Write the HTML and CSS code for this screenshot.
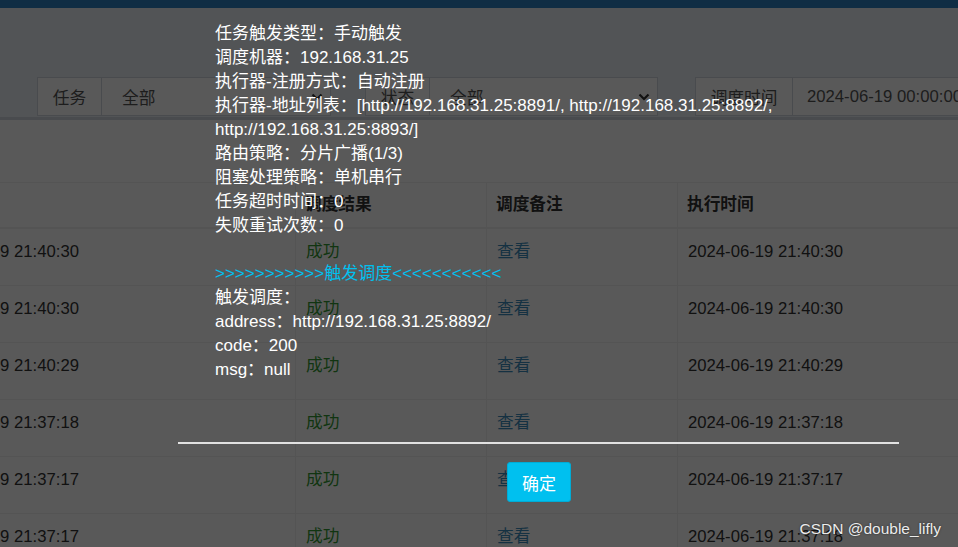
FILE: index.html
```html
<!DOCTYPE html>
<html lang="zh-CN">
<head>
<meta charset="utf-8">
<title>调度日志</title>
<link rel="stylesheet" href="styles.css">
</head>
<body>
<div class="page">
  <header class="topbar"></header>
  <section class="content">
    <div class="filters">
      <div class="igroup g1">
        <span class="addon">任务</span>
        <div class="select"><span>全部</span><svg class="chev" width="12" height="8" viewBox="0 0 12 8"><polyline points="1.5,1.5 6,6 10.5,1.5" fill="none" stroke="#333" stroke-width="2.2"/></svg></div>
      </div>
      <div class="igroup g2">
        <span class="addon">状态</span>
        <div class="select"><span>全部</span><svg class="chev" width="12" height="8" viewBox="0 0 12 8"><polyline points="1.5,1.5 6,6 10.5,1.5" fill="none" stroke="#333" stroke-width="2.2"/></svg></div>
      </div>
      <div class="igroup g3">
        <span class="addon wide">调度时间</span>
        <div class="input">2024-06-19 00:00:00 - 2024-06-19 23:59:59</div>
      </div>
    </div>
    <div class="box">
      <div class="box-body">
        <table class="log-table">
          <colgroup><col class="c1"><col class="c2"><col class="c3"><col class="c4"></colgroup>
          <thead>
            <tr><th>调度时间</th><th>调度结果</th><th>调度备注</th><th>执行时间</th></tr>
          </thead>
          <tbody>
            <tr><td>2024-06-19 21:40:30</td><td class="ok">成功</td><td class="link">查看</td><td>2024-06-19 21:40:30</td></tr>
            <tr><td>2024-06-19 21:40:30</td><td class="ok">成功</td><td class="link">查看</td><td>2024-06-19 21:40:30</td></tr>
            <tr><td>2024-06-19 21:40:29</td><td class="ok">成功</td><td class="link">查看</td><td>2024-06-19 21:40:29</td></tr>
            <tr><td>2024-06-19 21:37:18</td><td class="ok">成功</td><td class="link">查看</td><td>2024-06-19 21:37:18</td></tr>
            <tr><td>2024-06-19 21:37:17</td><td class="ok">成功</td><td class="link">查看</td><td>2024-06-19 21:37:17</td></tr>
            <tr><td>2024-06-19 21:37:17</td><td class="ok">成功</td><td class="link">查看</td><td>2024-06-19 21:37:18</td></tr>
          </tbody>
        </table>
      </div>
    </div>
  </section>
</div>

<div class="backdrop"></div>

<div class="dialog">
  <div class="dialog-body">任务触发类型：手动触发<br>调度机器：192.168.31.25<br>执行器-注册方式：自动注册<br>执行器-地址列表：[http://192.168.31.25:8891/, http://192.168.31.25:8892/, http://192.168.31.25:8893/]<br>路由策略：分片广播(1/3)<br>阻塞处理策略：单机串行<br>任务超时时间：0<br>失败重试次数：0<br><br><span class="trigger">&gt;&gt;&gt;&gt;&gt;&gt;&gt;&gt;&gt;&gt;&gt;触发调度&lt;&lt;&lt;&lt;&lt;&lt;&lt;&lt;&lt;&lt;&lt;</span><br>触发调度：<br>address：http://192.168.31.25:8892/<br>code：200<br>msg：null</div>
  <div class="dialog-line"></div>
  <div class="dialog-foot"><button class="btn-ok" type="button">确定</button></div>
</div>

<div class="watermark">CSDN @double_lifly</div>
</body>
</html>
```

FILE: styles.css
```css
html, body {
  margin: 0;
  padding: 0;
}
body {
  width: 958px;
  height: 547px;
  overflow: hidden;
  position: relative;
  font-family: "Liberation Sans", "Noto Sans CJK SC", sans-serif;
  color: #333;
  background: #ecf0f5;
}

.page {
  width: 958px;
  height: 547px;
  overflow: hidden;
}

.topbar {
  height: 8px;
  background: #2b81c2;
}

.content {
  background: #ecf0f5;
}

.filters {
  display: flex;
  padding: 69px 0 0 37px;
  margin-bottom: 1px;
  font-size: 16.7px;
  color: #555;
}

.igroup {
  display: flex;
  height: 39px;
  box-sizing: border-box;
}
.g1 { flex: none; width: 294px; margin-right: 34px; }
.g2 { flex: none; width: 293px; margin-right: 37px; }
.g3 { flex: 1; min-width: 0; }

.addon {
  width: 65px;
  flex: none;
  display: flex;
  align-items: center;
  justify-content: center;
  background: #fff;
  border: 1px solid #d2d6de;
  box-sizing: border-box;
}
.addon.wide { width: 98px; }

.select,
.input {
  flex: 1;
  min-width: 0;
  display: flex;
  align-items: center;
  justify-content: space-between;
  background: #fff;
  border: 1px solid #d2d6de;
  border-left: 0;
  box-sizing: border-box;
  padding: 0 7px 0 20px;
  white-space: nowrap;
  overflow: hidden;
}
.input {
  padding-left: 14px;
  justify-content: flex-start;
  border-right: 0;
}
.chev { display: block; flex: none; }

.box {
  background: #fff;
  border-top: 3px solid #d2d6de;
  height: 440px;
}
.box-body {
  padding-top: 62px;
  overflow: hidden;
}

.log-table {
  margin-left: -87px;
  border-collapse: collapse;
  table-layout: fixed;
  width: 1070px;
  font-size: 16.7px;
  line-height: 24px;
}
.c1 { width: 382px; }
.c2 { width: 191px; }
.c3 { width: 191px; }
.c4 { width: 306px; }

.log-table th,
.log-table td {
  border: 1px solid #f0f0f0;
  text-align: left;
  vertical-align: top;
  white-space: nowrap;
  overflow: hidden;
}
.log-table th {
  padding: 10px 9px;
  font-weight: bold;
  color: #333;
  border-bottom-width: 2px;
}
.log-table td {
  padding: 11px 9px 21px 10px;
  color: #333;
}
.log-table td.ok { color: #339933; }
.log-table td.link { color: #3c8dbc; }

.backdrop {
  position: absolute;
  inset: 0;
  background: rgba(0, 0, 0, 0.65);
}

.dialog {
  position: absolute;
  left: 178px;
  top: 22px;
  width: 721px;
}
.dialog-body {
  padding: 0 37px;
  font-size: 17px;
  line-height: 24px;
  color: #fff;
}
.trigger { color: #00c0ef; }

.dialog-line {
  margin-top: 60px;
  height: 2px;
  background: #e2e2e2;
}
.dialog-foot {
  display: flex;
  justify-content: center;
  padding-top: 18px;
}
.btn-ok {
  width: 64px;
  height: 40px;
  margin-left: 1px;
  border: 1px solid #00acd6;
  border-radius: 3px;
  background: #00c0ef;
  color: #fff;
  font-family: "Liberation Sans", "Noto Sans CJK SC", sans-serif;
  font-size: 17px;
  padding: 0;
}

.watermark {
  position: absolute;
  right: 17px;
  bottom: 9px;
  font-size: 15.5px;
  color: #ececec;
  text-shadow: 0 0 2px rgba(0, 0, 0, 0.6);
}
```
